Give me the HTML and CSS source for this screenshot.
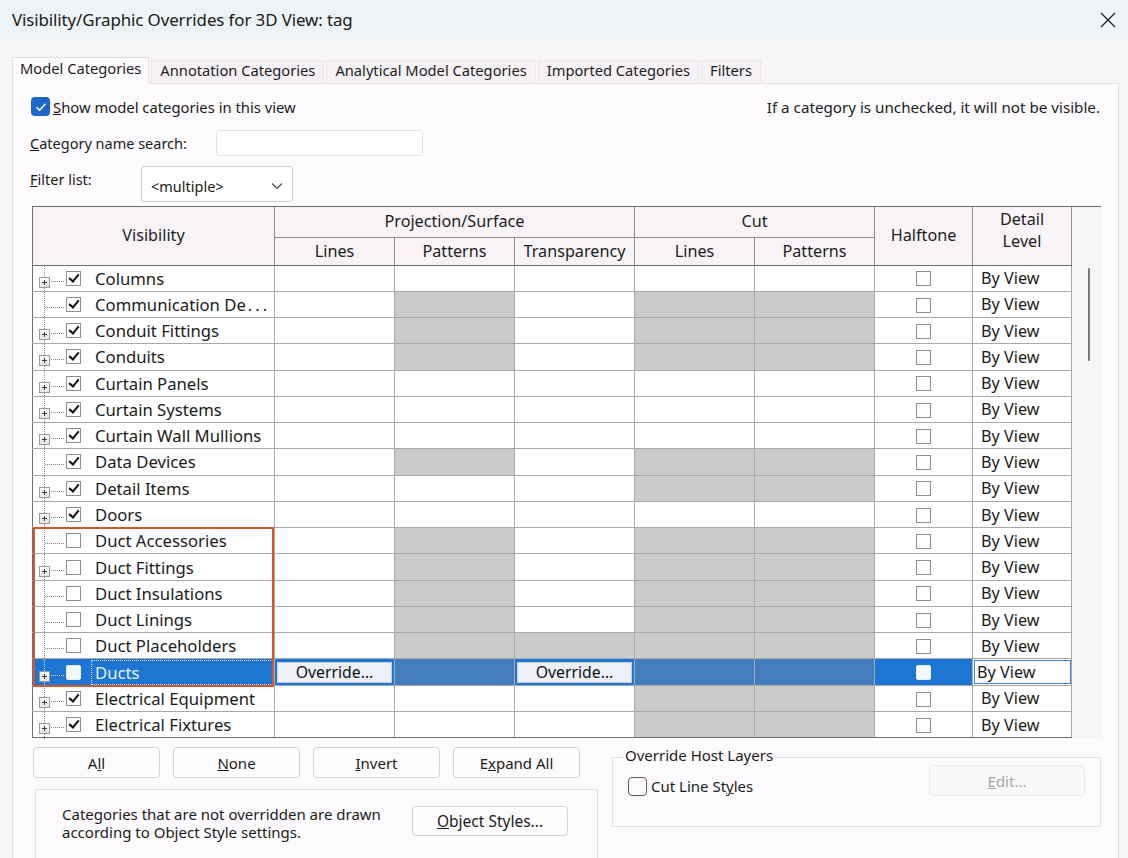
FILE: index.html
```html
<!DOCTYPE html>
<html>
<head>
<meta charset="utf-8">
<title>Visibility/Graphic Overrides</title>
<link rel="stylesheet" href="styles.css">
</head>
<body>
<div class="win">
  <div class="titlebar">
    <span class="title">Visibility/Graphic Overrides for 3D View: tag</span>
    <svg class="close" width="16" height="16" viewBox="0 0 16 16"><path d="M1 1L15 15M15 1L1 15" stroke="#222" stroke-width="1.3" fill="none"/></svg>
  </div>
  <div class="tabs">
    <div class="tab active">Model Categories</div>
    <div class="tab">Annotation Categories</div>
    <div class="tab">Analytical Model Categories</div>
    <div class="tab">Imported Categories</div>
    <div class="tab">Filters</div>
  </div>
  <div class="panel">
    <div class="toprow">
      <div class="show">
        <span class="bluecb"><svg width="14" height="14" viewBox="0 0 14 14"><path d="M2.5 7.2L5.6 10.2L11.5 3.8" stroke="#fff" stroke-width="1.5" fill="none"/></svg></span>
        <span><u>S</u>how model categories in this view</span>
      </div>
      <span class="hint">If a category is unchecked, it will not be visible.</span>
    </div>
    <div class="searchrow">
      <span class="lbl"><u>C</u>ategory name search:</span>
      <span class="input"></span>
    </div>
    <div class="filterrow">
      <span class="lbl2"><u>F</u>ilter list:</span>
      <span class="select"><span>&lt;multiple&gt;</span><svg width="12" height="8" viewBox="0 0 12 8"><path d="M1 1.5L6 6.5L11 1.5" stroke="#444" stroke-width="1.1" fill="none"/></svg></span>
    </div>

    <div class="gridwrap">
      <table class="grid">
        <colgroup>
          <col class="c-vis"><col class="c-std"><col class="c-std"><col class="c-std"><col class="c-std"><col class="c-std"><col class="c-half"><col class="c-det">
        </colgroup>
        <thead>
          <tr class="hr1">
            <th rowspan="2">Visibility</th>
            <th colspan="3">Projection/Surface</th>
            <th colspan="2">Cut</th>
            <th rowspan="2">Halftone</th>
            <th rowspan="2" class="det">Detail<br>Level</th>
          </tr>
          <tr class="hr2">
            <th>Lines</th><th>Patterns</th><th>Transparency</th><th>Lines</th><th>Patterns</th>
          </tr>
        </thead>
        <tbody>
          <tr><td class="vis"><div class="vc"><span class="tree"><span class="exp"></span></span><span class="cb on"></span><span class="nm">Columns</span></div></td><td></td><td></td><td></td><td></td><td></td><td class="ht"><span class="cb"></span></td><td class="dl">By View</td></tr>
          <tr><td class="vis"><div class="vc"><span class="tree"></span><span class="cb on"></span><span class="nm">Communication De<span class="dots">...</span></span></div></td><td></td><td class="h"></td><td></td><td class="h"></td><td class="h"></td><td class="ht"><span class="cb"></span></td><td class="dl">By View</td></tr>
          <tr><td class="vis"><div class="vc"><span class="tree"><span class="exp"></span></span><span class="cb on"></span><span class="nm">Conduit Fittings</span></div></td><td></td><td class="h"></td><td></td><td class="h"></td><td class="h"></td><td class="ht"><span class="cb"></span></td><td class="dl">By View</td></tr>
          <tr><td class="vis"><div class="vc"><span class="tree"><span class="exp"></span></span><span class="cb on"></span><span class="nm">Conduits</span></div></td><td></td><td class="h"></td><td></td><td class="h"></td><td class="h"></td><td class="ht"><span class="cb"></span></td><td class="dl">By View</td></tr>
          <tr><td class="vis"><div class="vc"><span class="tree"><span class="exp"></span></span><span class="cb on"></span><span class="nm">Curtain Panels</span></div></td><td></td><td></td><td></td><td></td><td></td><td class="ht"><span class="cb"></span></td><td class="dl">By View</td></tr>
          <tr><td class="vis"><div class="vc"><span class="tree"><span class="exp"></span></span><span class="cb on"></span><span class="nm">Curtain Systems</span></div></td><td></td><td></td><td></td><td></td><td></td><td class="ht"><span class="cb"></span></td><td class="dl">By View</td></tr>
          <tr><td class="vis"><div class="vc"><span class="tree"><span class="exp"></span></span><span class="cb on"></span><span class="nm">Curtain Wall Mullions</span></div></td><td></td><td></td><td></td><td></td><td></td><td class="ht"><span class="cb"></span></td><td class="dl">By View</td></tr>
          <tr><td class="vis"><div class="vc"><span class="tree"></span><span class="cb on"></span><span class="nm">Data Devices</span></div></td><td></td><td class="h"></td><td></td><td class="h"></td><td class="h"></td><td class="ht"><span class="cb"></span></td><td class="dl">By View</td></tr>
          <tr><td class="vis"><div class="vc"><span class="tree"><span class="exp"></span></span><span class="cb on"></span><span class="nm">Detail Items</span></div></td><td></td><td></td><td></td><td class="h"></td><td class="h"></td><td class="ht"><span class="cb"></span></td><td class="dl">By View</td></tr>
          <tr><td class="vis"><div class="vc"><span class="tree"><span class="exp"></span></span><span class="cb on"></span><span class="nm">Doors</span></div></td><td></td><td></td><td></td><td></td><td></td><td class="ht"><span class="cb"></span></td><td class="dl">By View</td></tr>
          <tr><td class="vis"><div class="vc"><span class="tree"></span><span class="cb"></span><span class="nm">Duct Accessories</span></div></td><td></td><td class="h"></td><td></td><td class="h"></td><td class="h"></td><td class="ht"><span class="cb"></span></td><td class="dl">By View</td></tr>
          <tr><td class="vis"><div class="vc"><span class="tree"><span class="exp"></span></span><span class="cb"></span><span class="nm">Duct Fittings</span></div></td><td></td><td class="h"></td><td></td><td class="h"></td><td class="h"></td><td class="ht"><span class="cb"></span></td><td class="dl">By View</td></tr>
          <tr><td class="vis"><div class="vc"><span class="tree"></span><span class="cb"></span><span class="nm">Duct Insulations</span></div></td><td></td><td class="h"></td><td></td><td class="h"></td><td class="h"></td><td class="ht"><span class="cb"></span></td><td class="dl">By View</td></tr>
          <tr><td class="vis"><div class="vc"><span class="tree"></span><span class="cb"></span><span class="nm">Duct Linings</span></div></td><td></td><td class="h"></td><td></td><td class="h"></td><td class="h"></td><td class="ht"><span class="cb"></span></td><td class="dl">By View</td></tr>
          <tr><td class="vis"><div class="vc"><span class="tree"></span><span class="cb"></span><span class="nm">Duct Placeholders</span></div></td><td></td><td class="h"></td><td class="h"></td><td class="h"></td><td class="h"></td><td class="ht"><span class="cb"></span></td><td class="dl">By View</td></tr>
          <tr class="sel"><td class="vis"><div class="vc"><span class="tree"><span class="exp"></span></span><span class="cb"></span><span class="nm focus">Ducts</span></div></td><td class="ov"><span class="ovbtn">Override...</span></td><td class="h"></td><td class="ov"><span class="ovbtn">Override...</span></td><td class="h"></td><td class="h"></td><td class="ht"><span class="cb"></span></td><td class="dl edit"><span>By View</span></td></tr>
          <tr><td class="vis"><div class="vc"><span class="tree"><span class="exp"></span></span><span class="cb on"></span><span class="nm">Electrical Equipment</span></div></td><td></td><td></td><td></td><td class="h"></td><td class="h"></td><td class="ht"><span class="cb"></span></td><td class="dl">By View</td></tr>
          <tr><td class="vis"><div class="vc"><span class="tree"><span class="exp"></span></span><span class="cb on"></span><span class="nm">Electrical Fixtures</span></div></td><td></td><td></td><td></td><td class="h"></td><td class="h"></td><td class="ht"><span class="cb"></span></td><td class="dl">By View</td></tr>
        </tbody>
      </table>
      <div class="scroll"><div class="thumb"></div></div>
      <div class="redbox"></div>
    </div>

    <div class="bottom">
      <div class="leftcol">
        <div class="btns">
          <span class="btn">A<u>l</u>l</span>
          <span class="btn"><u>N</u>one</span>
          <span class="btn"><u>I</u>nvert</span>
          <span class="btn">E<u>x</u>pand All</span>
        </div>
        <div class="note">
          <p>Categories that are not overridden are drawn<br>according to Object Style settings.</p>
          <span class="btn wide"><u>O</u>bject Styles...</span>
        </div>
      </div>
      <div class="group">
        <span class="legend">Override Host Layers</span>
        <div class="grow">
          <div class="cutline"><span class="gcb"></span><span>Cut Line St<u>y</u>les</span></div>
          <span class="btn disabled"><u>E</u>dit...</span>
        </div>
      </div>
    </div>
  </div>
</div>
</body>
</html>
```
FILE: styles.css
```css
* { box-sizing: border-box; }
html, body { margin: 0; padding: 0; }
body {
  width: 1128px;
  height: 858px;
  overflow: hidden;
  background: #f8f5f8;
  font-family: "Noto Sans", "Open Sans", sans-serif;
  color: #1b1b1b;
}
.win { width: 1128px; height: 858px; display: flex; flex-direction: column; }

.titlebar {
  height: 40px;
  flex: none;
  display: flex;
  align-items: center;
  justify-content: space-between;
  padding: 0 12px 0 12px;
  background: #eef3f5;
}
.title { font-size: 16.9px; color: #1a1a1a; letter-spacing: -0.1px; margin-top: -1px; }

.tabs {
  display: flex;
  align-items: flex-end;
  height: 43px;
  padding: 16px 0 0 12px;
  flex: none;
}
.tab {
  height: 23px;
  padding: 0 8px;
  font-size: 14.7px;
  line-height: 18px;
  margin-right: 2px;
  color: #1e1e1e;
  background: #f5f1f5;
  border: 1px solid #ebe7eb;
  border-bottom: none;
}
.tab.active {
  height: 27px;
  line-height: 21px;
  padding: 0 7px 0 7px;
  background: #fdfbfd;
  border-color: #e2dee2;
  margin-bottom: -1px;
  position: relative;
  z-index: 1;
}

.panel {
  flex: 1;
  margin: 0 9px 0 12px;
  background: #fdfbfd;
  border: 1px solid #e2dee2;
  border-bottom: none;
  padding: 12px 17px 0 19px;
}

.toprow {
  display: flex;
  justify-content: space-between;
  align-items: center;
  height: 21px;
  font-size: 14.8px;
}
.show { display: flex; align-items: center; gap: 3px; margin-left: -1px; }
.bluecb {
  width: 19px; height: 19px;
  border-radius: 4px;
  background: #1c67c9;
  display: inline-flex; align-items: center; justify-content: center;
}
.hint { margin-right: 1px; font-size: 15.2px; }

.searchrow {
  display: flex;
  align-items: center;
  margin-top: 13px;
  font-size: 14.5px;
}
.lbl { width: 184px; margin-left: -2px; padding-left: 0; }
.input {
  width: 207px; height: 26px;
  background: #fff;
  border: 1px solid #e6e2e6;
  border-radius: 3px;
  margin-left: 2px;
}

.filterrow {
  display: flex;
  align-items: flex-start;
  margin-top: 10px;
  font-size: 14.5px;
}
.lbl2 { width: 111px; margin-left: -2px; padding-top: 3px; }
.select {
  width: 152px; height: 36px;
  background: #fff;
  border: 1px solid #cfcbcf;
  border-radius: 3px;
  display: flex; align-items: center; justify-content: space-between;
  padding: 3px 9px 0 9px;
  font-size: 14.5px;
}

/* grid */
.gridwrap {
  position: relative;
  display: flex;
  margin-top: 4px;
  width: 1069px;
  border-top: 1px solid #6f6f6f;
}
.grid {
  border-collapse: collapse;
  table-layout: fixed;
  width: 1039px;
  font-size: 16.2px;
}
.c-vis { width: 242px; }
.c-std { width: 120px; }
.c-half { width: 98px; }
.c-det { width: 99px; }
.grid th {
  font-weight: normal;
  background: #f7f3f7;
  border: 1px solid #8e8e8e;
  border-top: none;
  padding: 0;
  text-align: center;
  color: #1d1d1d;
}
.hr1 { height: 30px; }
.hr2 { height: 28px; }
.hr1 th { padding-bottom: 1px; }
.grid th.det { line-height: 22px; padding-bottom: 12px; }
.grid thead tr:last-child th, .grid thead th[rowspan] { border-bottom: 1px solid #6f6f6f; }
.grid th:first-child { border-left: 1px solid #6f6f6f; }
.grid td {
  height: 26.28px;
  padding: 0;
  background: #fff;
  border: 1px solid #a9a9a9;
  border-top: none;
}
.grid td:first-child { border-left: 1px solid #6f6f6f; }
.grid tbody tr:last-child td { border-bottom: 1px solid #6f6f6f; }

.vc { display: flex; align-items: center; height: 25px; }
.tree { position: relative; width: 33px; align-self: stretch; flex: none; }
.tree::before {
  content: ""; position: absolute; left: 11px; top: 0; bottom: -2px;
  border-left: 1px dotted #8a8a8a;
}
.tree::after {
  content: ""; position: absolute; left: 12px; right: 2px; top: 15px;
  border-top: 1px dotted #8a8a8a;
}
.exp {
  position: absolute; left: 6px; top: 11px; z-index: 1;
  width: 11px; height: 11px;
  border: 1px solid #9a9a9a;
  background: linear-gradient(#ffffff, #e4e4e4);
}
.exp::before { content: ""; position: absolute; left: 2px; top: 4px; width: 5px; height: 1px; background: #3c3c3c; }
.exp::after { content: ""; position: absolute; left: 4px; top: 2px; width: 1px; height: 5px; background: #3c3c3c; }

.cb {
  width: 15px; height: 15px; flex: none;
  border: 1px solid #8f8f8f;
  background: #fff;
  display: inline-block;
  position: relative;
}
.cb.on::after {
  content: "";
  position: absolute;
  left: 4px; top: 0px;
  width: 4px; height: 8px;
  border: solid #111;
  border-width: 0 2.2px 2.2px 0;
  transform: rotate(40deg);
}
.nm { margin-left: 14px; white-space: nowrap; color: #1b1b1b; font-size: 16.7px; }
.dots { letter-spacing: 3px; margin-left: 2px; }

.grid td.h {
  background-color: #cbcbcb;
  background-image: repeating-conic-gradient(#a9a9a9 0 25%, #ececec 0 50%);
  background-size: 2px 2px;
}
.grid td.ht { text-align: center; }
.grid td.ht .cb { vertical-align: middle; margin-top: -2px; }
.grid td.dl { padding-left: 8px; color: #1b1b1b; }

/* selected row */
.grid tr.sel td { background: #1c76d2; }
.grid tr.sel td.h {
  background-color: #3c7bc0;
  background-image: repeating-conic-gradient(#2c66a6 0 25%, #5b93cf 0 50%);
  background-size: 2px 2px;
}
.grid tr.sel .tree::before, .grid tr.sel .tree::after { border-color: #c9dcf2; }
.grid tr.sel .cb { border-color: #e8f0fb; background: #f4f8fd; border-radius: 2px; }
.nm.focus {
  color: #eaf2ff;
  flex: 1;
  align-self: stretch;
  display: flex; align-items: center;
  margin-left: 10px;
  padding-left: 4px;
  outline: 1px dotted #d6e4f5;
  outline-offset: -1px;
  margin-right: 1px;
}
.grid td.ov { padding: 2px 2px 2px 2px; }
.ovbtn {
  display: flex; align-items: center; justify-content: center;
  height: 21px;
  background: #eef0f8;
  border: 1px solid #c3cbe0;
  font-size: 15.8px;
  color: #111;
}
.grid tr.sel td.edit {
  background: #fff;
  padding-left: 4px;
  outline: 1px solid #3b86d8;
  outline-offset: -2px;
}

.scroll {
  width: 30px;
  flex: none;
  position: relative;
  background: #f8f5f8;
}
.thumb {
  position: absolute;
  left: 16px; top: 61px;
  width: 2px; height: 93px;
  background: #7a7a7a;
  border-radius: 1px;
}
.redbox {
  position: absolute;
  z-index: 5;
  left: 1px; top: 320px;
  width: 241px; height: 160px;
  border: 2.5px solid #d9532b;
  pointer-events: none;
}

/* bottom */
.bottom {
  display: flex;
  gap: 14px;
  margin-top: 9px;
}
.leftcol { width: 566px; flex: none; }
.btns { display: flex; gap: 13px; padding-left: 1px; }
.btn {
  display: inline-flex; align-items: center; justify-content: center;
  width: 127px; height: 31px;
  background: #fdfcfd;
  border: 1px solid #d6d2d6;
  border-radius: 4px;
  font-size: 15px;
  color: #1b1b1b;
}
.note {
  margin-top: 11px;
  margin-left: 3px;
  height: 80px;
  border: 1px solid #e3dfe3;
  border-bottom: none;
  display: flex;
  align-items: flex-start;
  padding: 15px 0 0 26px;
  font-size: 15px;
}
.note p { margin: 0; line-height: 18px; width: 350px; margin-top: 0; }
.btn.wide { width: 156px; height: 30px; margin-left: 0; margin-top: 1px; font-size: 15.5px; }

.group {
  position: relative;
  width: 489px;
  height: 70px;
  margin-top: 10px;
  border: 1px solid #e3dfe3;
  padding: 0 15px 0 15px;
  font-size: 15px;
}
.legend {
  position: absolute;
  left: 10px; top: -13px;
  padding: 0 2px;
  background: #fdfbfd;
}
.grow { display: flex; justify-content: space-between; align-items: flex-start; padding-top: 7px; }
.cutline { display: flex; align-items: center; gap: 4px; margin-top: 11px; margin-left: 0; }
.gcb {
  width: 19px; height: 19px;
  border: 1px solid #5a5a5a;
  border-radius: 4px;
  background: #fbf9fb;
  display: inline-block;
}
.btn.disabled {
  width: 156px; height: 31px;
  color: #a6a6a6;
  background: #faf8fa;
  border-color: #ece8ec;
}
```
